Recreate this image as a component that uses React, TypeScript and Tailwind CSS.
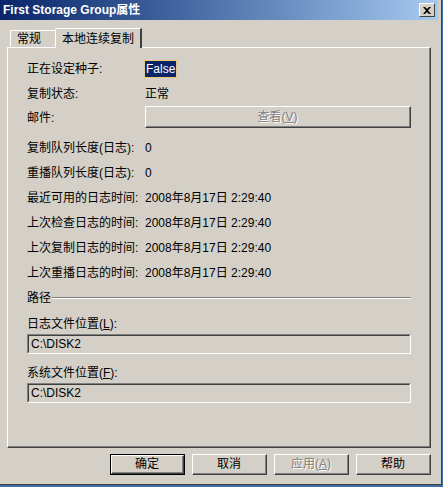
import React from 'react';

const FONT = { fontFamily: '"Liberation Sans", "Noto Sans CJK SC", sans-serif' };

// classic raised 3D button edges
const Btn: React.FC<{ children: React.ReactNode; def?: boolean; disabled?: boolean; className?: string }> = ({ children, def, disabled, className = '' }) => (
  <div className={`${def ? 'border border-black' : ''} ${className}`}>
    <div className="h-full border-t border-l border-white border-r border-b border-r-[#404040] border-b-[#404040]">
      <div className="h-full flex items-center justify-center border-r border-b border-[#808080]">
        <span className={disabled ? 'text-[#808080] [text-shadow:1px_1px_0_#fff]' : 'text-black'}>{children}</span>
      </div>
    </div>
  </div>
);

const Sunken: React.FC<{ value: string }> = ({ value }) => (
  <div className="h-[20px] border-t border-l border-[#808080] border-r border-b border-r-white border-b-white">
    <div className="h-full flex items-center pl-[2px] border-t border-l border-[#404040] border-r border-b border-r-[#d4d0c8] border-b-[#d4d0c8]">
      {value}
    </div>
  </div>
);

const rows: [string, string][] = [
  ['复制队列长度(日志):', '0'],
  ['重播队列长度(日志):', '0'],
  ['最近可用的日志时间:', '2008年8月17日 2:29:40'],
  ['上次检查日志的时间:', '2008年8月17日 2:29:40'],
  ['上次复制日志的时间:', '2008年8月17日 2:29:40'],
  ['上次重播日志的时间:', '2008年8月17日 2:29:40'],
];

const Row: React.FC<{ label: string; children: React.ReactNode }> = ({ label, children }) => (
  <div className="flex items-center h-[25px]">
    <div className="w-[118px] shrink-0">{label}</div>
    <div>{children}</div>
  </div>
);

export default function App() {
  return (
    <div className="w-[443px] h-[487px] bg-[#3a6ea5] text-[12px] text-black leading-none" style={FONT}>
      <div className="w-[442px] h-[485px] bg-[#d4d0c8] flex flex-col border-r border-b border-r-[#404040] border-b-[#404040]">
        {/* Title bar */}
        <div className="h-[20px] mr-[3px] flex items-center justify-between pl-[3px] pr-[3px] bg-gradient-to-r from-[#0a246a] to-[#a6caf0]">
          <span className="text-white font-bold text-[12px]">First Storage Group属性</span>
          <div className="w-[16px] h-[14px] bg-[#d4d0c8] border-t border-l border-white border-r border-b border-r-[#404040] border-b-[#404040] flex items-center justify-center">
            <svg width="8" height="7" viewBox="0 0 8 7">
              <path d="M0 0h2l2 2 2-2h2L5 3.5 8 7H6L4 5 2 7H0l3-3.5z" fill="#000" />
            </svg>
          </div>
        </div>

        {/* Tabs */}
        <div className="flex items-end h-[27px] pl-[10px] mt-[0px]">
          <div className="h-[17px] w-[46px] flex items-center pl-[6px] border-t border-l border-white border-r border-r-[#808080] rounded-tl-[2px] -mb-[0px]">
            常规
          </div>
          <div className="relative h-[20px] w-[87px] -ml-[1px] flex items-center pl-[6px] bg-[#d4d0c8] border-t border-l border-white border-r-2 border-r-[#404040] rounded-tl-[2px] -mb-[1px] z-10">
            本地连续复制
          </div>
        </div>

        {/* Tab panel */}
        <div className="ml-[7px] w-[424px] h-[401px] border-t border-l border-white border-r border-b border-r-[#404040] border-b-[#404040]">
          <div className="h-full border-r border-b border-[#808080] pl-[19px] pr-[18px] pt-[8px]">
            <Row label="正在设定种子:">
              <span className="bg-[#0a246a] text-white px-[1px] py-[1px] outline-1 outline-dotted outline-[#e8c060]">False</span>
            </Row>
            <Row label="复制状态:">正常</Row>
            <div className="flex items-center h-[22px]">
              <div className="w-[118px] shrink-0 pt-[2px]">邮件:</div>
              <Btn disabled className="w-[267px] h-[22px]">
                查看(<span className="underline">V</span>)
              </Btn>
            </div>
            <div className="mt-[7px]">
              {rows.map(([l, v]) => (
                <Row key={l} label={l}>{v}</Row>
              ))}
            </div>

            {/* Path group */}
            <div className="flex items-center h-[24px] mt-[1px]">
              <span>路径</span>
              <div className="flex-1 ml-[1px] h-[2px] border-t border-[#808080] border-b border-b-white" />
            </div>
            <div className="h-[22px] flex items-end pb-[4px] mt-[2px]">
              日志文件位置(<span className="underline">L</span>):
            </div>
            <Sunken value="C:\DISK2" />
            <div className="h-[29px] flex items-end pb-[4px]">
              系统文件位置(<span className="underline">F</span>):
            </div>
            <Sunken value="C:\DISK2" />
          </div>
        </div>

        {/* Dialog buttons */}
        <div className="flex justify-end gap-[7px] pr-[10px] mt-[6px]">
          <Btn def className="w-[75px] h-[21px]">确定</Btn>
          <Btn className="w-[75px] h-[21px]">取消</Btn>
          <Btn disabled className="w-[75px] h-[21px]">
            应用(<span className="underline">A</span>)
          </Btn>
          <Btn className="w-[75px] h-[21px]">帮助</Btn>
        </div>
      </div>
    </div>
  );
}
